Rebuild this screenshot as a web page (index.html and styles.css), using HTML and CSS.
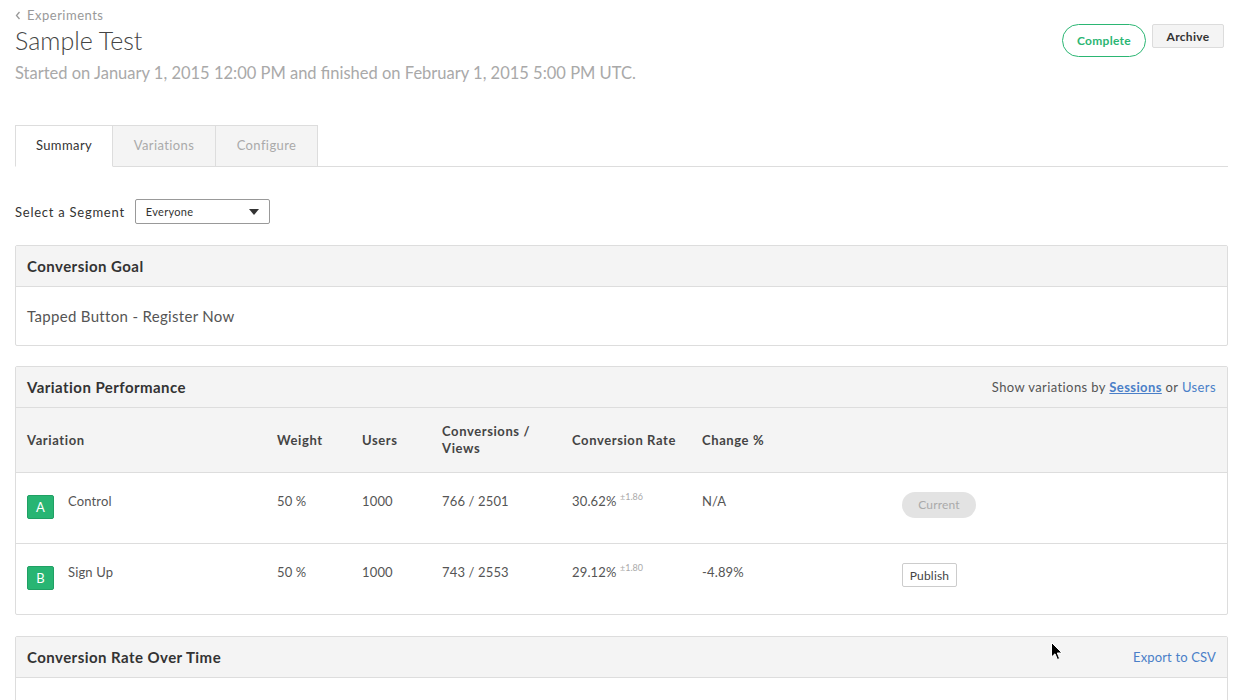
FILE: index.html
```html
<!DOCTYPE html>
<html>
<head>
<meta charset="utf-8">
<link rel="stylesheet" href="styles.css">
</head>
<body>
<div class="page">
  <header class="top">
    <div class="titles">
      <a class="back" href="#"><svg width="6" height="9" viewBox="0 0 6 9"><path d="M4.5 1 L1.5 4.5 L4.5 8" fill="none" stroke="#999" stroke-width="1.3"/></svg>Experiments</a>
      <h1>Sample Test</h1>
      <p class="sub">Started on January 1, 2015 12:00 PM and finished on February 1, 2015 5:00 PM UTC.</p>
    </div>
    <div class="actions">
      <button class="btn-complete">Complete</button>
      <button class="btn-archive">Archive</button>
    </div>
  </header>

  <nav class="tabs">
    <span class="tab active">Summary</span>
    <span class="tab">Variations</span>
    <span class="tab">Configure</span>
  </nav>

  <div class="segment">
    <label>Select a Segment</label>
    <div class="select">Everyone<svg width="10" height="6" viewBox="0 0 10 6"><path d="M0 0 H10 L5 6 Z" fill="#333"/></svg></div>
  </div>

  <section class="panel">
    <div class="panel-head"><h2>Conversion Goal</h2></div>
    <div class="panel-body goal">Tapped Button - Register Now</div>
  </section>

  <section class="panel">
    <div class="panel-head">
      <h2>Variation Performance</h2>
      <div class="showby">Show variations by <a class="strong" href="#">Sessions</a> or <a href="#">Users</a></div>
    </div>
    <div class="trow thead">
      <div>Variation</div>
      <div>Weight</div>
      <div>Users</div>
      <div class="narrow">Conversions / Views</div>
      <div>Conversion Rate</div>
      <div>Change %</div>
      <div></div>
    </div>
    <div class="trow">
      <div class="var"><span class="badge">A</span>Control</div>
      <div>50 %</div>
      <div>1000</div>
      <div>766 / 2501</div>
      <div>30.62% <sup>±1.86</sup></div>
      <div>N/A</div>
      <div><span class="pill-current">Current</span></div>
    </div>
    <div class="trow">
      <div class="var"><span class="badge">B</span>Sign Up</div>
      <div>50 %</div>
      <div>1000</div>
      <div>743 / 2553</div>
      <div>29.12% <sup>±1.80</sup></div>
      <div>-4.89%</div>
      <div><button class="btn-publish">Publish</button></div>
    </div>
  </section>

  <section class="panel panel-last">
    <div class="panel-head">
      <h2>Conversion Rate Over Time</h2>
      <a class="export" href="#">Export to CSV</a>
    </div>
    <div class="panel-body chart"></div>
  </section>
</div>
<svg class="cursor" width="12" height="19" viewBox="0 0 12 19"><path d="M0.5 0.5 L0.5 15 L4 11.8 L6.4 17.5 L8.6 16.6 L6.3 11 L11 11 Z" fill="#000" stroke="#fff" stroke-width="1"/></svg>
</body>
</html>
```

FILE: styles.css
```css
* { box-sizing: border-box; }
html, body { margin: 0; padding: 0; background: #fff; }
body {
  font-family: "Lato", "Liberation Sans", sans-serif;
  color: #444;
  width: 1240px;
  height: 700px;
  overflow: hidden;
  position: relative;
}
.page { padding: 7px 12px 0 15px; }

.top { display: flex; justify-content: space-between; align-items: flex-start; }
.back {
  display: flex; align-items: center; gap: 6px;
  font-size: 13px; line-height: 16px; color: #999; text-decoration: none; letter-spacing: 0.5px;
}
h1 {
  margin: 1px 0 0; font-weight: 300; font-size: 25px; line-height: 32px; color: #444;
}
.sub { margin: 6px 0 0; font-size: 16.5px; line-height: 22px; color: #a9a9a9; font-weight: 400; }

.actions { display: flex; gap: 6px; padding-top: 17px; padding-right: 4px; }
button { font-family: inherit; cursor: pointer; }
.btn-complete {
  width: 84px; height: 33px; border: 1px solid #2bb673; border-radius: 17px;
  background: #fff; color: #2bb673; font-weight: 700; font-size: 12px; letter-spacing: 0.3px;
}
.btn-archive {
  width: 72px; height: 24px; border: 1px solid #dcdcdc; border-radius: 2px;
  background: #f4f4f4; color: #333; font-weight: 700; font-size: 12px; letter-spacing: 0.3px;
}

.tabs { display: flex; margin-top: 41px; border-bottom: 1px solid #ddd; height: 42px; }
.tab {
  height: 42px; line-height: 39px; font-size: 13px; color: #aaa; letter-spacing: 0.4px;
  background: #f4f4f4; border: 1px solid #ddd; border-left: none; text-align: center;
}
.tab:first-child { border-left: 1px solid #ddd; }
.tab.active { background: #fff; color: #333; border-bottom-color: #fff; width: 98px; }
.tab:nth-child(2) { width: 103px; }
.tab:nth-child(3) { width: 102px; }

.segment { display: flex; align-items: center; gap: 10px; margin-top: 32px; }
.segment label { font-size: 13px; color: #333; letter-spacing: 0.75px; }
.select {
  width: 135px; height: 25px; border: 1px solid #999; border-radius: 2px;
  display: flex; align-items: center; justify-content: space-between;
  padding: 0 10px; font-size: 11px; color: #333; letter-spacing: 0.3px;
}

.panel { border: 1px solid #ddd; border-radius: 2px; margin-top: 21px; }
.panel + .panel { margin-top: 20px; }
.panel + .panel-last { margin-top: 21px; }
.panel-head {
  height: 41px; background: #f4f4f4; border-bottom: 1px solid #ddd;
  display: flex; align-items: center; justify-content: space-between; padding: 0 11px;
}
.panel-head h2 { margin: 0; font-size: 15px; font-weight: 700; color: #333; letter-spacing: 0.45px; }
.panel-body.goal { height: 58px; display: flex; align-items: center; padding: 0 11px; font-size: 15px; color: #555; letter-spacing: 0.32px; }
.showby { font-size: 13px; color: #555; letter-spacing: 0.4px; }
.showby a { color: #4a7fc8; text-decoration: none; }
.showby a.strong { font-weight: 700; text-decoration: underline; }
.export { font-size: 13px; color: #4a7fc8; text-decoration: none; letter-spacing: 0.15px; }

.trow {
  display: grid;
  grid-template-columns: 250px 85px 80px 130px 130px 200px 1fr;
  padding: 19px 11px 0; height: 71px; border-top: 1px solid #ddd;
  font-size: 13px; color: #555; line-height: 18px; letter-spacing: 0.15px;
}
.trow.thead {
  border-top: none; background: #f4f4f4; height: 64px; padding-top: 0;
  align-items: center; font-weight: 700; color: #444; line-height: 17px; letter-spacing: 0.6px;
}
.narrow { max-width: 100px; }
.var { display: flex; align-items: flex-start; line-height: 18px; }
.badge {
  width: 27px; height: 24px; margin-top: 3px; margin-right: 14px;
  background: #28b573; border: 1px solid #20a064; border-radius: 2px; color: #fff;
  display: flex; align-items: flex-end; justify-content: center; padding-bottom: 2px;
  font-size: 13px;
}
sup { font-size: 9px; color: #aaa; vertical-align: top; position: relative; top: -4px; letter-spacing: 0; }
.pill-current {
  display: inline-flex; align-items: center; justify-content: center;
  width: 74px; height: 26px; border-radius: 13px; background: #e3e3e3; color: #aaa; font-size: 12px;
}
.btn-publish {
  margin-top: 0; width: 55px; height: 24px; background: #fff; border: 1px solid #ccc; border-radius: 2px;
  color: #444; font-size: 12px; padding: 0; letter-spacing: 0.2px;
}
.panel-body.chart { height: 40px; }

.cursor { position: absolute; left: 1051px; top: 642px; }
```
